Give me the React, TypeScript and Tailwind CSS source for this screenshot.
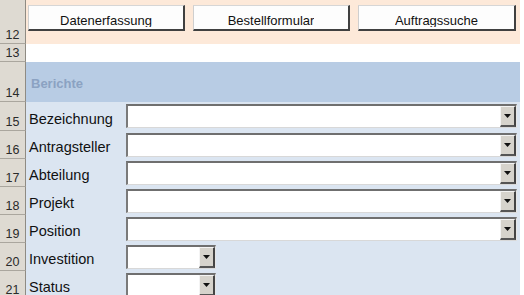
import React from 'react';

const font = { fontFamily: '"Liberation Sans", Arial, sans-serif' };

function Arrow() {
  return (
    <svg width={7} height={4} viewBox="0 0 7 4" className="shrink-0">
      <polygon points="0,0 7,0 3.5,4" fill="#111" />
    </svg>
  );
}

function Combo({ width }: { width: string }) {
  return (
    <div className={`${width} h-[24px] mt-[2px] flex bg-white border-t-2 border-l-2 border-t-[#6f6f6f] border-l-[#7a7a7a] border-b border-r border-b-[#d8d8d8] border-r-[#e6e6e6]`}>
      <div className="flex-1" />
      <div className="w-[16px] h-full bg-[#d6d3cc] border-t border-l border-t-[#f4f4f4] border-l-[#f4f4f4] border-r-2 border-b-2 border-r-[#444] border-b-[#555] flex items-center justify-center">
        <Arrow />
      </div>
    </div>
  );
}

function Row({ n, h, className = '', children }: { n: number; h: string; className?: string; children?: React.ReactNode }) {
  return (
    <div className={`flex ${h} shrink-0`}>
      <div className="w-[26px] h-full shrink-0 bg-[#dedad2] border-r border-r-[#8f8b83] border-b border-b-[#aaa69e] flex items-end justify-center pb-[2px] text-[12.5px] leading-none text-[#2a2a2a]">
        {n}
      </div>
      <div className={`w-[494px] h-full shrink-0 ${className}`}>{children}</div>
      <div className="flex-1 h-full bg-white" />
    </div>
  );
}

function SheetButton({ label, w }: { label: string; w: string }) {
  return (
    <div className={`${w} h-[26px] bg-[#fdfdfd] border-t border-l border-t-[#d6d6d6] border-l-[#cfcfcf] border-r-2 border-b-2 border-r-[#404040] border-b-[#404040] flex justify-center`}>
      <span className="block mt-[8px] h-[13px] overflow-hidden text-[13px] leading-none text-[#111]">{label}</span>
    </div>
  );
}

function FieldRow({ n, h, label, small }: { n: number; h: string; label: string; small?: boolean }) {
  return (
    <Row n={n} h={h} className="bg-[#dbe5f1] flex">
      <div className="w-[100px] self-end pl-[3px] pb-[5px] text-[14.5px] leading-none text-[#111] whitespace-nowrap">{label}</div>
      <Combo width={small ? 'w-[90px]' : 'w-[391px]'} />
    </Row>
  );
}

export default function App() {
  return (
    <div className="w-[524px] h-[295px] overflow-hidden bg-white flex flex-col" style={font}>
      <Row n={12} h="h-[44px]" className="bg-[#fde9d9] flex items-start gap-[8px] pl-[2px] pt-[5px]">
        <SheetButton label="Datenerfassung" w="w-[157px]" />
        <SheetButton label="Bestellformular" w="w-[157px]" />
        <SheetButton label="Auftragssuche" w="w-[158px]" />
      </Row>
      <Row n={13} h="h-[18px]" className="bg-white" />
      <Row n={14} h="h-[40px]" className="bg-[#b8cce4] pl-[5px] pt-[15px]">
        <span className="block text-[13px] leading-none font-bold text-[#8ba2c2]">Berichte</span>
      </Row>
      <FieldRow n={15} h="h-[29px]" label="Bezeichnung" />
      <FieldRow n={16} h="h-[28px]" label="Antragsteller" />
      <FieldRow n={17} h="h-[28px]" label="Abteilung" />
      <FieldRow n={18} h="h-[28px]" label="Projekt" />
      <FieldRow n={19} h="h-[28px]" label="Position" />
      <FieldRow n={20} h="h-[28px]" label="Investition" small />
      <FieldRow n={21} h="h-[28px]" label="Status" small />
    </div>
  );
}
